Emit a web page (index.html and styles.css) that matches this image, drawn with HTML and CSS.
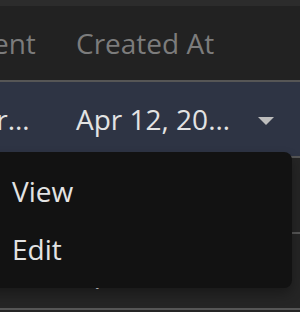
FILE: index.html
```html
<!DOCTYPE html>
<html lang="en">
<head>
    <meta charset="UTF-8">
    <meta name="viewport" content="width=device-width, initial-scale=1.0">
    <title>Records</title>
    <link rel="stylesheet" href="styles.css">
</head>
<body>
    <div class="toolbar-edge"></div>

    <div class="grid">
        <div class="grid-row grid-head">
            <div class="cell cell-name">Agent</div>
            <div class="cell cell-date">Created At</div>
            <div class="cell cell-action"></div>
        </div>

        <div class="grid-row is-selected">
            <div class="cell cell-name">Harmon Keller</div>
            <div class="cell cell-date">Apr 12, 2023</div>
            <div class="cell cell-action">
                <svg class="caret" width="16" height="8" viewBox="0 0 16 8"><path d="M0 0h16L8 8z"/></svg>
            </div>
        </div>

        <div class="grid-row">
            <div class="cell cell-name">Lena Morrow</div>
            <div class="cell cell-date">Apr 10, 2023</div>
            <div class="cell cell-action">
                <svg class="caret" width="16" height="8" viewBox="0 0 16 8"><path d="M0 0h16L8 8z"/></svg>
            </div>
        </div>

        <div class="grid-row">
            <div class="cell cell-name">Orin Walsh</div>
            <div class="cell cell-date">Apr 08, 2023</div>
            <div class="cell cell-action">
                <svg class="caret" width="16" height="8" viewBox="0 0 16 8"><path d="M0 0h16L8 8z"/></svg>
            </div>
        </div>

        <div class="grid-row">
            <div class="cell cell-name">Tess Rowan</div>
            <div class="cell cell-date">Apr 02, 2023</div>
            <div class="cell cell-action"></div>
        </div>

        <!-- row action menu, opened from the selected row -->
        <ul class="row-menu">
            <li>View</li>
            <li>Edit</li>
        </ul>
    </div>
</body>
</html>
```

FILE: styles.css
```css
:root {
    --page-bg: #222222;
    --row-bg: #252525;
    --edge-bg: #2c2c2c;
    --line: #565656;
    --selected-bg: #2e3444;
    --menu-bg: #121212;
    --head-text: #7c7c7c;
    --cell-text: #e3e3e3;
    --caret: #bdbdbd;
}

html, body {
    margin: 0;
    height: 100%;
}

body {
    font-family: 'Open Sans', 'Noto Sans', sans-serif;
    font-size: 28px;
    background-color: var(--page-bg);
    color: var(--cell-text);
    overflow: hidden;
}

.toolbar-edge {
    height: 6px;
    background: var(--edge-bg);
}

/* grid is scrolled horizontally, first column partly out of view */
.grid {
    position: relative;
    margin-left: -56px;
}

.grid-row {
    display: flex;
    height: 74px;
    border-bottom: 2px solid var(--line);
    background: var(--row-bg);
}

.grid-head {
    background: var(--page-bg);
    color: var(--head-text);
}

.grid-row.is-selected {
    background: var(--selected-bg);
}

.cell {
    display: flex;
    align-items: center;
    flex: none;
    box-sizing: border-box;
    padding: 0 16px;
    white-space: nowrap;
    overflow: hidden;
    line-height: 74px;
}

.cell-name,
.cell-date {
    display: block;
    text-overflow: ellipsis;
}

.cell-name {
    width: 116px;
}

.cell-date {
    width: 194px;
}

.cell-action {
    width: 60px;
    padding: 0 0 0 4px;
}

.caret {
    display: block;
    margin-top: 4px;
    fill: var(--caret);
}

/* dropdown menu */
.row-menu {
    position: absolute;
    top: 146px;
    left: 36px;
    width: 312px;
    margin: 0;
    padding: 10px 0;
    list-style: none;
    background: var(--menu-bg);
    border-radius: 8px;
    box-shadow: 0 6px 12px rgba(0, 0, 0, 0.3);
}

.row-menu li {
    height: 58px;
    line-height: 58px;
    padding-left: 32px;
    color: var(--cell-text);
}
```
